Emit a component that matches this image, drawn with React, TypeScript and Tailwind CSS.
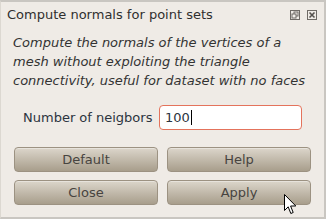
import React from 'react';

const font = { fontFamily: '"DejaVu Sans", Verdana, sans-serif' };

function FloatIcon() {
  return (
    <svg width="10" height="10" viewBox="0 0 10 10" className="block">
      <rect x="0.5" y="0.5" width="9" height="9" fill="none" stroke="#6f6b66" />
      <rect x="4" y="2" width="4" height="4" fill="none" stroke="#6f6b66" />
      <rect x="2" y="4" width="4" height="4" fill="#f2efea" stroke="#6f6b66" />
    </svg>
  );
}

function CloseIcon() {
  return (
    <svg width="10" height="10" viewBox="0 0 10 10" className="block">
      <rect x="0.5" y="0.5" width="9" height="9" fill="none" stroke="#6f6b66" />
      <path d="M2.5 2.5 L7.5 7.5 M7.5 2.5 L2.5 7.5" stroke="#55524e" strokeWidth="1.6" />
    </svg>
  );
}

function Cursor() {
  return (
    <svg width="13" height="21" viewBox="0 0 13 21" className="absolute left-[283px] top-[192px]">
      <path
        d="M0.5 0.5 L0.5 16.5 L4.2 12.8 L6.8 19.5 L9.2 18.5 L6.6 12 L11.8 12 Z"
        fill="#fff"
        stroke="#000"
        strokeWidth="1"
        strokeLinejoin="round"
      />
    </svg>
  );
}

function Btn({ label }: { label: string }) {
  return (
    <button
      type="button"
      className="h-[25px] rounded-[4px] border border-[#9c9282] bg-gradient-to-b from-[#dcd6cb] to-[#a89e8c] text-[13px] text-[#474440] shadow-[inset_0_1px_0_rgba(255,255,255,0.35)]"
    >
      {label}
    </button>
  );
}

export default function App() {
  return (
    <div
      className="relative h-[219px] w-[326px] overflow-hidden border-l border-l-[#dcd8d1] border-t-2 border-r-2 border-b-2 border-t-[#c9c6c1] border-r-[#c9c6c1] border-b-[#c9c6c1] bg-[#efebe6]"
      style={font}
    >
      <div className="flex h-[26px] items-center justify-between pl-[6px] pr-[7px]">
        <span className="text-[13px] text-[#2f2f2f]">Compute normals for point sets</span>
        <div className="flex gap-[7px]">
          <FloatIcon />
          <CloseIcon />
        </div>
      </div>

      <p className="mt-[5px] pl-[12px] pr-[8px] text-[13px] italic leading-[19px] text-[#333333]">
        Compute the normals of the vertices of a mesh without exploiting the triangle connectivity, useful for dataset with no faces
      </p>

      <div className="mt-[15px] flex items-center">
        <span className="w-[158px] pl-[22px] text-[13px] text-[#2c3440]">Number of neigbors</span>
        <div className="flex h-[25px] w-[143px] items-center rounded-[4px] border border-[#e4735c] bg-white pl-[5px] text-[13px] text-[#2c3440]">
          100<span className="ml-[1px] inline-block h-[15px] w-px bg-black" />
        </div>
      </div>

      <div className="mt-[17px] grid grid-cols-[144px_144px] gap-x-[9px] gap-y-[8px] pl-[13px]">
        <Btn label="Default" />
        <Btn label="Help" />
        <Btn label="Close" />
        <Btn label="Apply" />
      </div>

      <Cursor />
    </div>
  );
}
